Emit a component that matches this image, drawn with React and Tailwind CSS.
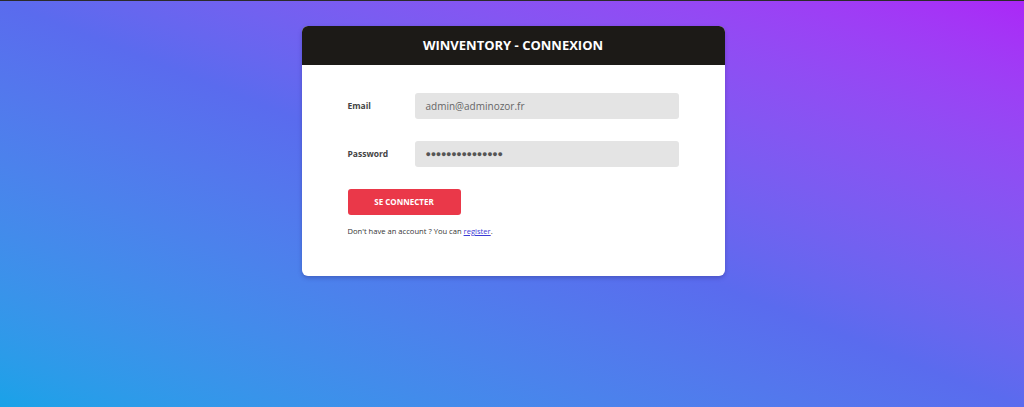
export default function App() {
  return (
    <div className="min-h-[407px] w-full border-t border-[#2b2b2b] bg-linear-to-tr from-[#18a2e8] via-[#5a6bee] to-[#ab27f7] font-['Open_Sans',sans-serif]">
      <div className="flex justify-center pl-[2px] pt-[25px]">
        <div className="w-[423px] overflow-hidden rounded-md bg-white shadow-[0_2px_4px_rgba(40,40,120,0.35)]">
          <div className="flex h-[39px] items-center justify-center bg-[#1c1a17]">
            <h1 className="text-[13px] font-bold text-white">WINVENTORY - CONNEXION</h1>
          </div>
          <div className="px-[46px] pb-[39px] pt-[28px]">
            <div className="flex items-center">
              <label className="w-[67px] text-[8.5px] font-bold text-[#444]">Email</label>
              <div className="flex h-[26px] w-[264px] items-center rounded-[3px] bg-[#e4e4e4] px-[11px] text-[10px] text-[#666]">
                admin@adminozor.fr
              </div>
            </div>
            <div className="mt-[22px] flex items-center">
              <label className="w-[67px] text-[8.5px] font-bold text-[#444]">Password</label>
              <div className="flex h-[26px] w-[264px] items-center rounded-[3px] bg-[#e4e4e4] px-[11px] text-[9px] tracking-[-0.3px] text-[#555]">
                ●●●●●●●●●●●●●●●
              </div>
            </div>
            <button className="mt-[22px] flex h-[26px] w-[113px] items-center justify-center rounded-[3px] bg-[#ea3849] text-[8px] font-bold text-white">
              SE CONNECTER
            </button>
            <p className="mt-[11px] text-[7.6px] text-[#333]">
              Don't have an account ? You can <a className="text-[#3b3bd6] underline" href="#">register</a>.
            </p>
          </div>
        </div>
      </div>
    </div>
  )
}
